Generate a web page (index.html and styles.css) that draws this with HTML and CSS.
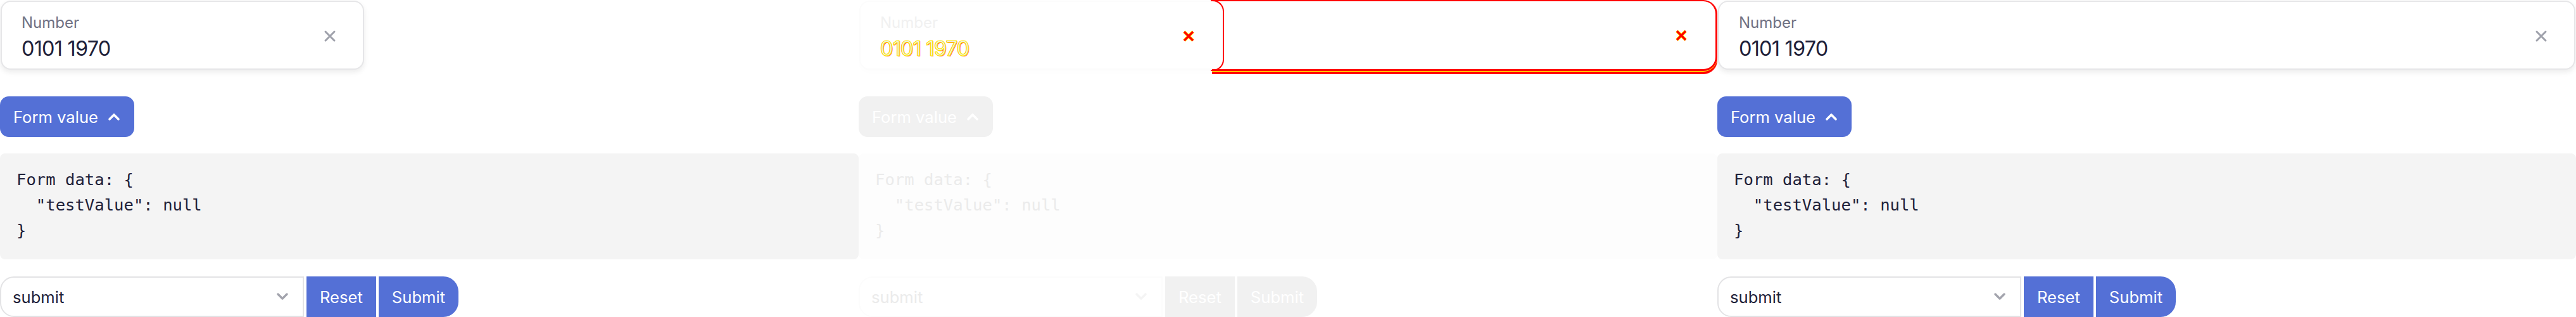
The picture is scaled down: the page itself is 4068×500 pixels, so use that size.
FILE: index.html
```html
<!DOCTYPE html>
<html lang="en">
<head>
<meta charset="utf-8">
<title>Visual diff</title>
<link rel="stylesheet" href="styles.css">
</head>
<body>
<main class="diff">
  <section class="panel">
    <div class="field field--narrow">
      <div class="field__text">
        <span class="field__label">Number</span>
        <span class="field__value">0101 1970</span>
      </div>
      <svg class="field__clear" viewBox="0 0 20 20"><path d="M3 3L17 17M17 3L3 17"/></svg>
    </div>
    <button class="toggle">Form value<svg class="toggle__chev" viewBox="0 0 20 14"><path d="M3 11L10 4L17 11"/></svg></button>
    <pre class="code">Form data: {
  "testValue": null
}</pre>
    <div class="actions">
      <div class="select"><span>submit</span><svg class="select__chev" viewBox="0 0 20 12"><path d="M3 2L10 9L17 2"/></svg></div>
      <button class="btn">Reset</button>
      <button class="btn btn--last">Submit</button>
    </div>
  </section>

  <section class="panel panel--diff">
    <div class="field field--narrow">
      <div class="field__text">
        <span class="field__label">Number</span>
        <span class="field__value">0101 1970</span>
      </div>
      <svg class="field__clear" viewBox="0 0 20 20"><path class="aa" d="M3 3L17 17M17 3L3 17"/><path d="M3 3L17 17M17 3L3 17"/></svg>
    </div>
    <button class="toggle">Form value<svg class="toggle__chev" viewBox="0 0 20 14"><path d="M3 11L10 4L17 11"/></svg></button>
    <pre class="code">Form data: {
  "testValue": null
}</pre>
    <div class="actions">
      <div class="select"><span>submit</span><svg class="select__chev" viewBox="0 0 20 12"><path d="M3 2L10 9L17 2"/></svg></div>
      <button class="btn">Reset</button>
      <button class="btn btn--last">Submit</button>
    </div>
    <div class="mark-frame"></div>
    <div class="mark-edge"></div>
    <svg class="mark-clear" viewBox="0 0 20 20"><path class="aa" d="M3 3L17 17M17 3L3 17"/><path d="M3 3L17 17M17 3L3 17"/></svg>
  </section>

  <section class="panel">
    <div class="field field--wide">
      <div class="field__text">
        <span class="field__label">Number</span>
        <span class="field__value">0101 1970</span>
      </div>
      <svg class="field__clear" viewBox="0 0 20 20"><path d="M3 3L17 17M17 3L3 17"/></svg>
    </div>
    <button class="toggle">Form value<svg class="toggle__chev" viewBox="0 0 20 14"><path d="M3 11L10 4L17 11"/></svg></button>
    <pre class="code">Form data: {
  "testValue": null
}</pre>
    <div class="actions">
      <div class="select"><span>submit</span><svg class="select__chev" viewBox="0 0 20 12"><path d="M3 2L10 9L17 2"/></svg></div>
      <button class="btn">Reset</button>
      <button class="btn btn--last">Submit</button>
    </div>
  </section>
</main>
</body>
</html>
```
FILE: styles.css
```css
html, body {
  margin: 0;
  padding: 0;
  background: #ffffff;
}

body {
  font-family: Inter, "Noto Sans", sans-serif;
}

.diff {
  display: flex;
  width: 4068px;
}

.panel {
  position: relative;
  flex: none;
  width: 1356px;
  height: 500px;
  overflow: hidden;
  box-sizing: border-box;
  padding-top: 1px;
  display: flex;
  flex-direction: column;
  align-items: flex-start;
}

/* Input field */
.field {
  box-sizing: border-box;
  display: flex;
  align-items: center;
  justify-content: space-between;
  height: 109px;
  margin-left: 1px;
  padding: 18px 42px 12px 31px;
  border: 2px solid #e6e6e8;
  border-radius: 16px;
  background: #ffffff;
  box-shadow: 0 4px 8px rgba(0, 0, 0, 0.08);
}

.field--narrow {
  width: 574px;
}

.field--wide {
  align-self: stretch;
  margin-right: 1px;
}

.field__text {
  display: flex;
  flex-direction: column;
}

.field__label {
  font-size: 24px;
  line-height: 29px;
  color: #6f7183;
}

.field__value {
  margin-top: 7px;
  font-size: 32.5px;
  line-height: 39px;
  letter-spacing: -0.8px;
  color: #1e2139;
}

.field__clear {
  width: 20px;
  height: 20px;
  margin-bottom: 4px;
  fill: none;
  stroke: #9fa1ab;
  stroke-width: 3;
  stroke-linecap: round;
}

/* Toggle button */
.toggle {
  display: flex;
  align-items: center;
  gap: 15px;
  height: 64px;
  margin-top: 42px;
  padding: 0 22px 0 21px;
  border: 0;
  border-radius: 14px;
  background: #5470d6;
  color: #ffffff;
  font-family: Inter, "Noto Sans", sans-serif;
  font-size: 25.6px;
}

.toggle__chev {
  width: 20px;
  height: 14px;
  fill: none;
  stroke: #ffffff;
  stroke-width: 3.6;
  stroke-linecap: round;
  stroke-linejoin: round;
}

/* Code block */
.code {
  align-self: stretch;
  margin: 26px 0 0;
  padding: 21px 26px 26px;
  border-radius: 8px;
  background: #f4f4f4;
  color: #1e2139;
  font-family: "DejaVu Sans Mono", monospace;
  font-size: 25.6px;
  line-height: 40px;
}

/* Actions row */
.actions {
  display: flex;
  gap: 4px;
  height: 64px;
  margin-top: 27px;
}

.select {
  box-sizing: border-box;
  display: flex;
  align-items: center;
  justify-content: space-between;
  width: 480px;
  height: 64px;
  padding: 0 22px 0 18px;
  border: 2px solid #e3e3e5;
  border-radius: 22px 0 0 22px;
  background: #ffffff;
  color: #1e2139;
  font-size: 25.6px;
}

.select__chev {
  width: 20px;
  height: 12px;
  fill: none;
  stroke: #a3a4ad;
  stroke-width: 3.4;
  stroke-linecap: round;
  stroke-linejoin: round;
}

.btn {
  height: 64px;
  padding: 0 21px;
  border: 0;
  background: #5470d6;
  color: #ffffff;
  font-family: Inter, "Noto Sans", sans-serif;
  font-size: 25.6px;
}

.btn--last {
  border-radius: 0 24px 24px 0;
}

/* Diff panel: faded original with highlighted differences */
.panel--diff .field {
  border-color: #fcfcfc;
  box-shadow: 0 4px 8px rgba(0, 0, 0, 0.012);
}

.panel--diff .field__label {
  color: #f1f1f1;
}

.panel--diff .field__value {
  color: #eeeeee;
  -webkit-text-stroke: 1.1px #ffee00;
  text-shadow: 1px 1px 0 rgba(255, 0, 0, 0.85), -1px 0 0 rgba(255, 40, 0, 0.5);
}

.panel--diff .field__clear,
.mark-clear {
  stroke: #ff0000;
  stroke-width: 3.4;
  stroke-linecap: butt;
}

.panel--diff .aa,
.mark-clear .aa {
  stroke: #ffff00;
  stroke-width: 5;
}

.panel--diff .toggle,
.panel--diff .btn {
  background: #f1f1f1;
}

.panel--diff .code {
  background: #fdfdfd;
  color: #ebebeb;
}

.panel--diff .select {
  border-color: #fcfcfc;
  color: #ebebeb;
}

.panel--diff .select__chev {
  stroke: #f4f4f4;
}

.mark-frame {
  position: absolute;
  left: 558px;
  top: 0;
  width: 798px;
  height: 112px;
  box-sizing: border-box;
  border: solid #ff0000;
  border-width: 2px 3px 3px 0;
  border-radius: 0 22px 22px 0;
  box-shadow: 0 1px 0 #ffff00, 0 5px 0 #ff0000;
}

.mark-edge {
  position: absolute;
  left: 556px;
  top: 0;
  width: 21px;
  height: 112px;
  box-sizing: border-box;
  border: 2px solid #ff0000;
  border-left: 0;
  border-radius: 0 18px 18px 0;
}

.mark-clear {
  position: absolute;
  left: 1289px;
  top: 46px;
  width: 20px;
  height: 20px;
  fill: none;
}
```
